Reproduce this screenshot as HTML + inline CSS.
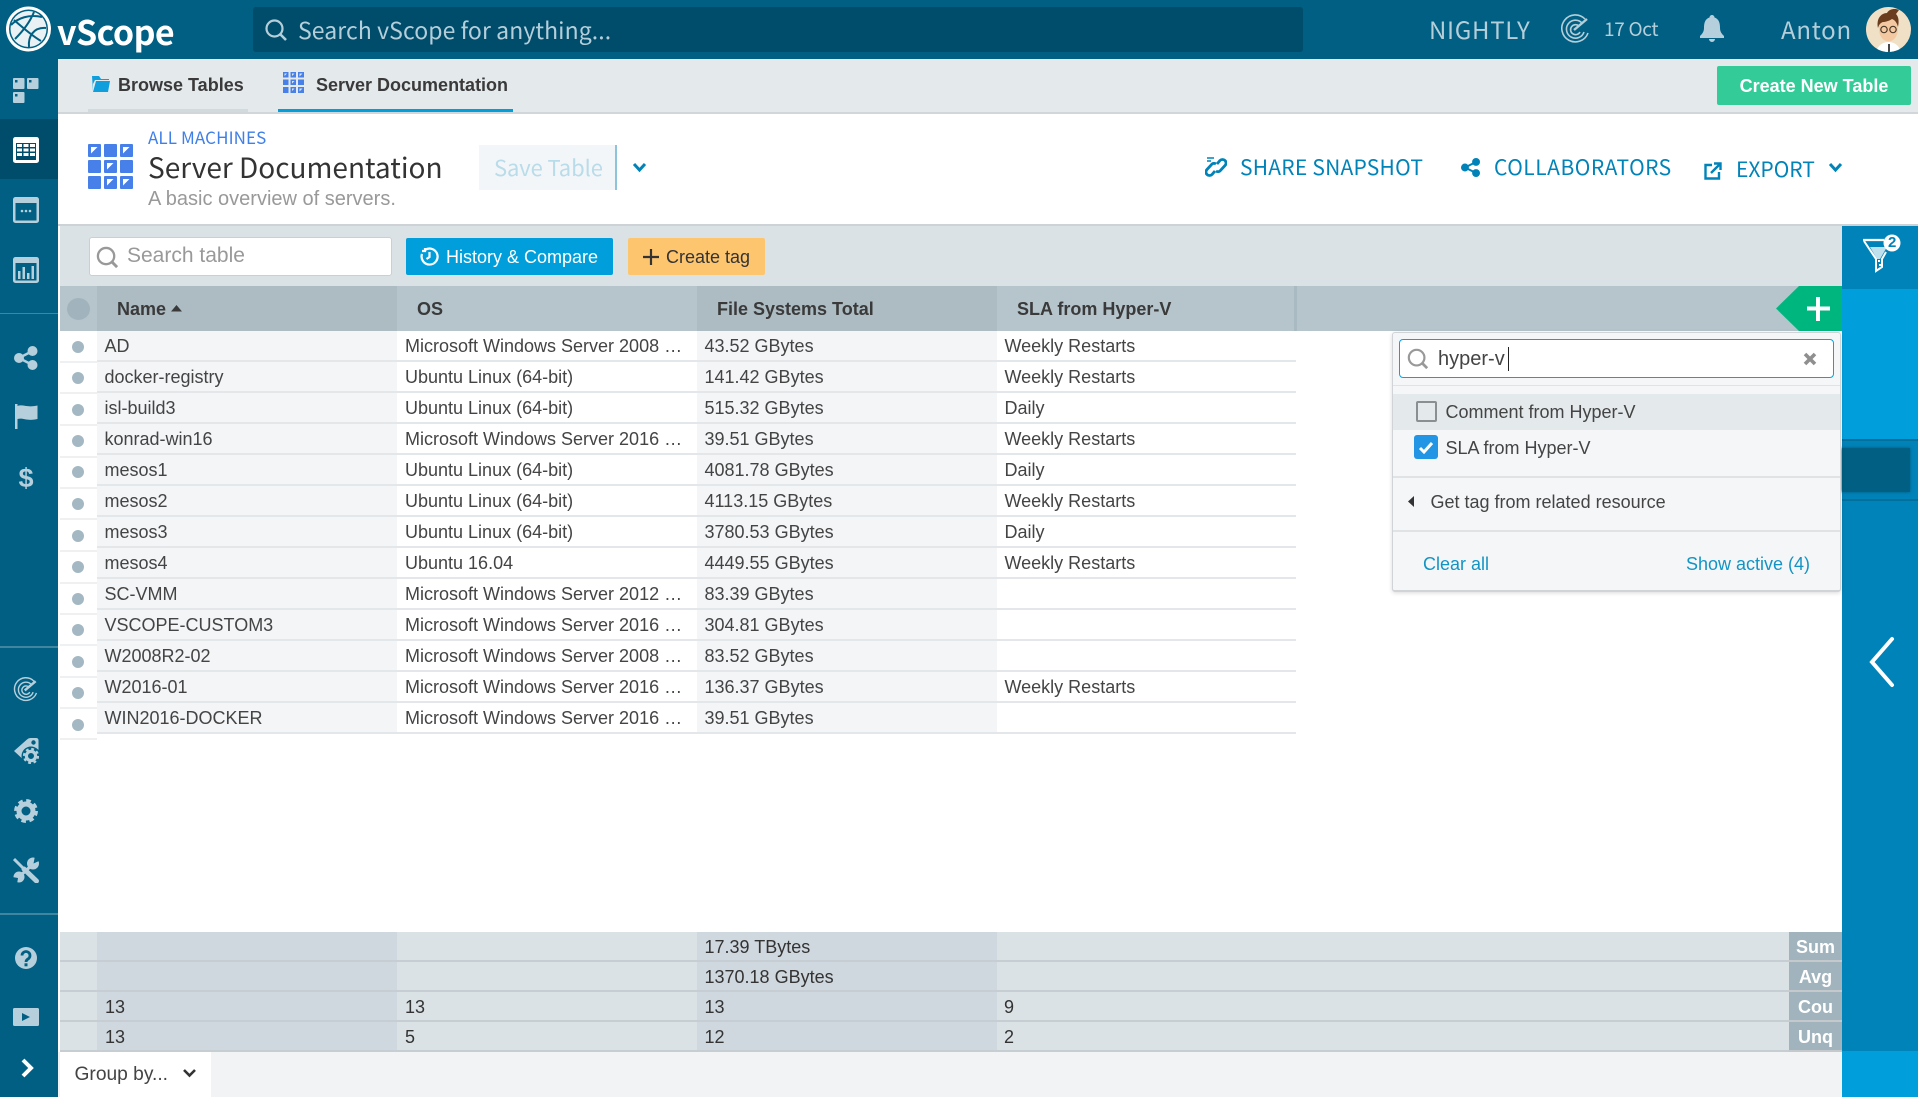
<!DOCTYPE html>
<html lang="en"><head><meta charset="utf-8"><title>vScope</title>
<style>
html,body{margin:0;padding:0;background:#fff}
#p{position:relative;width:1918px;height:1097px;overflow:hidden;background:#fff;font-family:"Liberation Sans",Arial,sans-serif;font-size:18px;color:#444}
#p div,#p span.t,#p svg{position:absolute}
.t{position:absolute;white-space:nowrap;line-height:30px;height:30px}
.o{font-family:"Noto Sans CJK JP","Liberation Sans",sans-serif}
.b{font-weight:bold}
.ic{fill:#b5d0dc}
.row{left:97px;width:1199px;height:31px;box-sizing:border-box;border-bottom:2px solid #e4e7ea}
.row .t{top:0}
.c1{left:7.5px}.c2{left:308px}.c3{left:607.5px}.c4{left:907.5px}
.dot{left:72px;width:12px;height:12px;border-radius:50%;background:#a4b8c3}
.dl{left:60px;width:37px;height:2px;background:#eef0f2}
.sr{left:60px;width:1729px;height:30px;box-sizing:border-box;border-bottom:2px solid #c6ced4;background:#dbe2e5}
.sl{left:1789px;width:53px;height:30px;box-sizing:border-box;border-bottom:2px solid #c5c9cb;background:#a1b4bd;color:#fff;font-weight:bold;text-align:center;line-height:30px;font-size:18px}
.sc{height:120px;top:932px;background:#d0d8df;opacity:1}
</style></head><body>
<div id="p">
<!-- top bar -->
<div style="left:0;top:0;width:1918px;height:59px;background:#005f82"></div>
<div style="left:0;top:59px;width:58px;height:1038px;background:#005f82"></div>
<svg style="left:5px;top:6px" width="47" height="47" viewBox="0 0 47 47"><circle cx="23.500" cy="23" r="22.500" fill="#fff"/><circle cx="23.500" cy="23" r="19.500" fill="#005f82"/><circle cx="23.500" cy="23" r="18" fill="#eaf1f4"/><path d="M6 19C13 12 24 8 37 11M10 33C17 26 25 16 29 6M24 41C23 31 28 21 41 22M9 14C17 21 29 31 36 35" fill="none" stroke="#005f82" stroke-width="2"/></svg>
<span class="t o b" style="left:57px;top:11px;height:40px;line-height:40px;font-size:34px;color:#fff;letter-spacing:-.6px;font-weight:700">vScope</span>
<div style="left:253px;top:7px;width:1050px;height:45px;background:#004c6b;border-radius:3px"></div>
<svg style="left:264px;top:18px" width="24" height="24" viewBox="0 0 24 24"><circle cx="10.500" cy="10.500" r="8" fill="none" stroke="#b5cfda" stroke-width="2.200"/><path d="M16.500 16.500L22 22" stroke="#b5cfda" stroke-width="2.600"/></svg>
<span class="t o" style="left:298px;top:14px;font-size:23px;color:#b5cfda;letter-spacing:.08px">Search vScope for anything...</span>
<span class="t o" style="left:1429px;top:14px;font-size:24px;color:#b5cfda;letter-spacing:.7px">NIGHTLY</span>
<svg style="left:1560px;top:14px" width="31" height="31" viewBox="0 0 31 31" fill="none" stroke="#b5cfda" stroke-width="1.600"><path d="M25 5A13.500 13.500 0 1 0 28 19"/><path d="M22 9A9 9 0 1 0 24 18"/><path d="M19 12A5 5 0 1 0 20 18"/><path d="M14 16L27 5" stroke-width="2.400"/></svg>
<span class="t o" style="left:1604px;top:14px;font-size:19px;color:#b5cfda;letter-spacing:-.3px">17 Oct</span>
<svg style="left:1699px;top:15px" width="26" height="28" viewBox="0 0 26 28"><path class="ic" d="M13 0a2.500 2.500 0 0 1 2.500 2.500C20 4 21 8 21 13c0 4 2 6 4 8v2H1v-2c2-2 4-4 4-8 0-5 1-9 5.500-10.500A2.500 2.500 0 0 1 13 0zM10 24h6a3 3 0 0 1-6 0z"/></svg>
<span class="t o" style="left:1781px;top:14px;font-size:24px;color:#b5cfda;letter-spacing:.75px">Anton</span>
<svg style="left:1866px;top:7px" width="45" height="45" viewBox="0 0 45 45"><defs><clipPath id="a"><circle cx="22.500" cy="22.500" r="22.500"/></clipPath></defs><g clip-path="url(#a)"><rect width="45" height="45" fill="#f0e0c6"/><path d="M10 45c2-7 7-10 12.500-10S33 38 35 45z" fill="#fff"/><ellipse cx="22.500" cy="22" rx="9.500" ry="12.500" fill="#f4c9a2"/><path d="M12 21C10 12 15 6 21 6c2-4 8-5 12-3l-3 4c3 3 3 8 2 13-1-4-3-7-6-8-3 2-7 3-9 3-3 1-4 3-5 6z" fill="#6b3d1f"/><circle cx="18" cy="22.500" r="3.200" fill="none" stroke="#4a3a2a" stroke-width="1.200"/><circle cx="27" cy="22.500" r="3.200" fill="none" stroke="#4a3a2a" stroke-width="1.200"/><path d="M23 37v8" stroke="#333" stroke-width="1.800"/></g></svg>

<!-- sidebar -->
<div style="left:0;top:119px;width:58px;height:60px;background:#004c6b"></div>
<svg style="left:13px;top:78px" width="26" height="26" viewBox="0 0 26 26"><rect class="ic" width="11.500" height="11" rx="1"/><rect class="ic" x="14" width="11.500" height="11" rx="1"/><rect class="ic" y="14" width="11.500" height="11" rx="1"/><rect x="2" y="2" width="2.500" height="2.500" fill="#005f82"/><rect x="16" y="2" width="2.500" height="2.500" fill="#005f82"/><rect x="2" y="16" width="2.500" height="2.500" fill="#005f82"/></svg>
<svg style="left:13px;top:137px" width="26" height="26" viewBox="0 0 26 26"><rect width="26" height="26" rx="2.500" fill="#fff"/><path d="M3 6h20v17H3z" fill="#004c6b"/><path d="M4 7h5v3H4zM10.500 7h5v3h-5zM17 7h5v3h-5zM4 11.500h5v3H4zM10.500 11.500h5v3h-5zM17 11.500h5v3h-5zM4 16h5v3H4zM10.500 16h5v3h-5zM17 16h5v3h-5z" fill="#fff"/></svg>
<svg style="left:13px;top:197px" width="26" height="26" viewBox="0 0 26 26"><rect class="ic" width="26" height="26" rx="2.500"/><rect x="2.500" y="6" width="21" height="17.500" fill="#005f82"/><circle class="ic" cx="9" cy="14" r="1.300"/><circle class="ic" cx="13" cy="14" r="1.300"/><circle class="ic" cx="17" cy="14" r="1.300"/></svg>
<svg style="left:13px;top:257px" width="26" height="26" viewBox="0 0 26 26"><rect class="ic" width="26" height="26" rx="2.500"/><rect x="2.500" y="6" width="21" height="17.500" fill="#005f82"/><path class="ic" d="M5 14h2.500v8H5zM9.500 10h2.500v12H9.500zM14 16h2.500v6H14zM18.500 9H21v13h-2.500z"/></svg>
<div style="left:0;top:313px;width:58px;height:1px;background:#41869f"></div>
<svg style="left:14px;top:346px" width="24" height="24" viewBox="0 0 24 24"><circle class="ic" cx="5" cy="12" r="5"/><circle class="ic" cx="18.500" cy="5" r="5"/><circle class="ic" cx="18.500" cy="19" r="5"/><path d="M5 12L18.500 5M5 12l13.500 7" stroke="#b5d0dc" stroke-width="2.400"/></svg>
<svg style="left:15px;top:404px" width="23" height="26" viewBox="0 0 23 26"><path class="ic" d="M0 0h2.500v25H0zM2.500 2C8 0 12 4 22.500 1.500V15C12 17.500 8 13.500 2.500 15z"/></svg>
<span class="t b" style="left:18.500px;top:463px;font-size:27px;color:#b5d0dc">$</span>
<div style="left:0;top:646px;width:58px;height:2px;background:#41869f"></div>
<svg style="left:13px;top:677px" width="26" height="26" viewBox="0 0 31 31" fill="none" stroke="#b5d0dc" stroke-width="1.700"><path d="M25 5A13.500 13.500 0 1 0 28 19"/><path d="M22 9A9 9 0 1 0 24 18"/><path d="M19 12A5 5 0 1 0 20 18"/><path d="M14 16L27 5" stroke-width="3"/></svg>
<svg style="left:13px;top:737px" width="26" height="27" viewBox="0 0 26 27"><path class="ic" d="M1 14L14 2.500Q15.500 1 17.500 1H23Q25.500 1 25.500 3.500V12Q25.500 14 24 16L14 26z"/><circle cx="20.500" cy="5.500" r="2.200" fill="#005f82"/><circle cx="18" cy="19" r="9.500" fill="#005f82"/><circle cx="18" cy="19" r="4.600" fill="none" stroke="#b5d0dc" stroke-width="3.200"/><circle cx="18" cy="19" r="7" fill="none" stroke="#b5d0dc" stroke-width="2.200" stroke-dasharray="2.800 2.700"/></svg>
<svg style="left:14px;top:799px" width="24" height="24" viewBox="0 0 24 24"><circle cx="12" cy="12" r="7" fill="none" stroke="#b5d0dc" stroke-width="5"/><circle cx="12" cy="12" r="10.200" fill="none" stroke="#b5d0dc" stroke-width="3.500" stroke-dasharray="4.500 3.500"/></svg>
<svg style="left:13px;top:857px" width="26" height="26" viewBox="0 0 26 26"><path d="M1 2L11 12" stroke="#b5d0dc" stroke-width="3"/><path d="M11 12L23.500 24" stroke="#b5d0dc" stroke-width="5" stroke-linecap="round"/><path d="M7 19L19 8" stroke="#b5d0dc" stroke-width="3.200"/><circle class="ic" cx="20" cy="6.500" r="6"/><path d="M20.500 6.500L22 -1L27 3.500z" fill="#005f82"/><circle class="ic" cx="6" cy="20" r="5.500"/><path d="M5 21L-1 20L4 27z" fill="#005f82"/></svg>
<div style="left:0;top:913px;width:58px;height:2px;background:#41869f"></div>
<svg style="left:15px;top:947px" width="22" height="22" viewBox="0 0 22 22"><circle class="ic" cx="11" cy="11" r="11"/><path d="M7 8.500a4 4 0 1 1 6 3.500c-1.300.8-2 1.300-2 3" fill="none" stroke="#005f82" stroke-width="2.800"/><rect x="9.500" y="16.300" width="3" height="3" fill="#005f82"/></svg>
<svg style="left:13px;top:1008px" width="26" height="18" viewBox="0 0 26 18"><rect class="ic" width="26" height="18" rx="1.500"/><path d="M9 5l8 4-8 4z" fill="#005f82"/></svg>
<svg style="left:20px;top:1058px" width="14" height="20" viewBox="0 0 14 20"><path d="M3 2l8 8-8 8" fill="none" stroke="#fff" stroke-width="4"/></svg>

<!-- tabs -->
<div style="left:58px;top:59px;width:1860px;height:55px;background:#e4e9ec;border-bottom:2px solid #d0d6da;box-sizing:border-box"></div>
<div style="left:88px;top:109px;width:160px;height:3px;background:#d2dade"></div>
<div style="left:278px;top:109px;width:235px;height:3px;background:#009fdb"></div>
<svg style="left:92px;top:75px" width="18" height="17" viewBox="0 0 18 17"><path d="M0 1h7l2 3h8v1H3L1 9v7zM4 6h14l-2 11H1z" fill="#0f9fdc"/></svg>
<span class="t b" style="left:118px;top:70px;color:#3a3a3a">Browse Tables</span>
<svg style="left:283px;top:72px" width="21" height="21" viewBox="0 0 21 21" fill="#4680e8"><path d="M0 0h5.500v5.500H0zM7.500 0H13v5.500H7.500zM15 0h6v5.500h-6zM0 7.500h5.500V13H0zM7.500 7.500H13V13H7.500zM15 7.500h6V13h-6zM0 15h5.500v6H0zM7.500 15H13v6H7.500zM15 15h6v6h-6z"/><path fill="#dfe6ea" d="M1.500 1.500h2.500l-2.500 2.500zM16.500 1.500h3l-3 3zM9 1.500h2.500L9 4zM9 9h2.500L9 11.500zM9 16.500h2.500L9 19zM16.500 16.500h3l-3 3z"/></svg>
<span class="t b" style="left:316px;top:70px;color:#3a3a3a">Server Documentation</span>
<div style="left:1717px;top:66px;width:194px;height:39px;background:#33cc99;border-radius:2px;color:#fff;font-weight:bold;text-align:center;line-height:41px">Create New Table</div>

<!-- page header -->
<svg style="left:88px;top:144px" width="45" height="45" viewBox="0 0 45 45" fill="#4680e8"><rect width="13" height="13" rx="1"/><rect x="16" width="13" height="13" rx="1"/><rect x="32" width="13" height="13" rx="1"/><rect y="16" width="13" height="13" rx="1"/><rect x="16" y="16" width="13" height="13" rx="1"/><rect x="32" y="16" width="13" height="13" rx="1"/><rect y="32" width="13" height="13" rx="1"/><rect x="16" y="32" width="13" height="13" rx="1"/><rect x="32" y="32" width="13" height="13" rx="1"/><path fill="#fff" d="M3 3h6.500L3 9.500zM35 3h6.500L35 9.500zM19 19h6.500L19 25.500zM19 35h6.500L19 41.500zM35 35h6.500L35 41.500z"/></svg>
<span class="t o" style="left:148px;top:122px;font-size:17px;color:#3f7fe8;letter-spacing:.1px">ALL MACHINES</span>
<span class="t o" style="left:148px;top:152px;font-size:28px;color:#333;letter-spacing:0">Server Documentation</span>
<span class="t" style="left:148px;top:184px;font-size:20px;color:#999">A basic overview of servers.</span>
<div style="left:479px;top:145px;width:136px;height:45px;background:#f3f6f8;border-right:2px solid #8cc4dc"></div>
<span class="t o" style="left:494px;top:152px;font-size:22px;color:#b9dcea;letter-spacing:-.1px">Save Table</span>
<svg style="left:632px;top:162px" width="15" height="11" viewBox="0 0 15 11"><path d="M2 2l5.500 6L13 2" fill="none" stroke="#0083b8" stroke-width="3"/></svg>
<svg style="left:1205px;top:156px" width="22" height="22" viewBox="0 0 22 22" fill="none" stroke="#0083b8" stroke-width="2.800"><path d="M12 8l3-3.500a3.500 3.500 0 0 1 5 5l-5 5.500a3.500 3.500 0 0 1-4 0"/><path d="M10 15l-3 3.500a3.500 3.500 0 0 1-5-5l5-5.500a3.500 3.500 0 0 1 4 0"/><path d="M2 2h7M2 5h4" stroke-width="1.500"/></svg>
<span class="t o" style="left:1240px;top:152px;font-size:21px;color:#0083b8;letter-spacing:.23px">SHARE SNAPSHOT</span>
<svg style="left:1461px;top:158px" width="19" height="19" viewBox="0 0 24 24"><circle fill="#0083b8" cx="5" cy="12" r="5"/><circle fill="#0083b8" cx="19" cy="5" r="5"/><circle fill="#0083b8" cx="19" cy="19" r="5"/><path d="M5 12L19 5M5 12l14 7" stroke="#0083b8" stroke-width="2.500"/></svg>
<span class="t o" style="left:1494px;top:152px;font-size:21px;color:#0083b8;letter-spacing:.5px">COLLABORATORS</span>
<svg style="left:1704px;top:162px" width="18" height="18" viewBox="0 0 18 18" fill="none" stroke="#0083b8" stroke-width="2.400"><path d="M8 3H1.500v13.500H15V10"/><path d="M7 11L16 2M10 1.500h6.500V8"/></svg>
<span class="t o" style="left:1736px;top:154px;font-size:21px;color:#0083b8;letter-spacing:0">EXPORT</span>
<svg style="left:1828px;top:162px" width="15" height="11" viewBox="0 0 15 11"><path d="M2 2l5.500 6L13 2" fill="none" stroke="#0083b8" stroke-width="3"/></svg>

<!-- toolbar -->
<div style="left:58px;top:224px;width:1860px;height:2px;background:#ccd2d6"></div>
<div style="left:60px;top:226px;width:1782px;height:60px;background:#dbe2e5"></div>
<div style="left:89px;top:237px;width:303px;height:39px;box-sizing:border-box;background:#fff;border:1px solid #c9cfd2;border-radius:3px"></div>
<svg style="left:96px;top:246px" width="23" height="23" viewBox="0 0 24 24"><circle cx="10.500" cy="10.500" r="8.500" fill="none" stroke="#999" stroke-width="2.400"/><path d="M16.500 16.500L22 22" stroke="#999" stroke-width="3"/></svg>
<span class="t" style="left:127px;top:241px;font-size:21px;color:#999">Search table</span>
<div style="left:406px;top:238px;width:207px;height:37px;background:#009fdb;border-radius:2px"></div>
<svg style="left:420px;top:247px" width="19" height="19" viewBox="0 0 19 19" fill="none" stroke="#fff" stroke-width="2.200"><path d="M5 3a8 8 0 1 1-3 4"/><path d="M2 4h3V1M9.500 5v5l-3 2"/></svg>
<span class="t" style="left:446px;top:242px;color:#fff">History &amp; Compare</span>
<div style="left:628px;top:238px;width:137px;height:37px;background:#fec56f;border-radius:2px"></div>
<svg style="left:643px;top:249px" width="16" height="16" viewBox="0 0 16 16"><path d="M8 0v16M0 8h16" stroke="#333" stroke-width="2.200"/></svg>
<span class="t" style="left:666px;top:242px;color:#333">Create tag</span>

<!-- table header -->
<div style="left:60px;top:286px;width:1782px;height:45px;background:#b6c4cc"></div>
<div style="left:97px;top:286px;width:300px;height:45px;background:#adbcc3"></div>
<div style="left:697px;top:286px;width:300px;height:45px;background:#adbcc3"></div>
<div style="left:1294px;top:286px;width:3px;height:45px;background:#a9bac3"></div>
<div style="left:67px;top:298px;width:23px;height:22px;border-radius:50%;background:#a1b4bd"></div>
<span class="t b" style="left:117px;top:294px;color:#3a3a3a">Name</span>
<svg style="left:171px;top:305px" width="11" height="7" viewBox="0 0 11 7"><path d="M5.500 0L11 6.500H0z" fill="#3a3a3a"/></svg>
<span class="t b" style="left:417px;top:294px;color:#3a3a3a">OS</span>
<span class="t b" style="left:717px;top:294px;color:#3a3a3a">File Systems Total</span>
<span class="t b" style="left:1017px;top:294px;color:#3a3a3a">SLA from Hyper-V</span>
<svg style="left:1776px;top:286px" width="66" height="45" viewBox="0 0 66 45"><path d="M23 0H66V45H23L0 22.500z" fill="#00b67f"/><path d="M42 11v24M31 22.500h23" stroke="#fff" stroke-width="4"/></svg>

<!-- table body -->
<div style="left:97px;top:331px;width:300px;height:403px;background:#f3f5f7"></div>
<div style="left:697px;top:331px;width:300px;height:403px;background:#f3f5f7"></div>
<div class="dot" style="top:341px"></div><div class="dl" style="top:361px"></div>
<div class="dot" style="top:372px"></div><div class="dl" style="top:392px"></div>
<div class="dot" style="top:404px"></div><div class="dl" style="top:424px"></div>
<div class="dot" style="top:435px"></div><div class="dl" style="top:456px"></div>
<div class="dot" style="top:466px"></div><div class="dl" style="top:487px"></div>
<div class="dot" style="top:498px"></div><div class="dl" style="top:518px"></div>
<div class="dot" style="top:530px"></div><div class="dl" style="top:550px"></div>
<div class="dot" style="top:561px"></div><div class="dl" style="top:582px"></div>
<div class="dot" style="top:593px"></div><div class="dl" style="top:613px"></div>
<div class="dot" style="top:624px"></div><div class="dl" style="top:644px"></div>
<div class="dot" style="top:656px"></div><div class="dl" style="top:676px"></div>
<div class="dot" style="top:687px"></div><div class="dl" style="top:707px"></div>
<div class="dot" style="top:719px"></div><div class="dl" style="top:738px"></div>

<div class="row" style="top:331px"><span class="t c1">AD</span><span class="t c2">Microsoft Windows Server 2008 …</span><span class="t c3">43.52 GBytes</span><span class="t c4">Weekly Restarts</span></div>
<div class="row" style="top:362px"><span class="t c1">docker-registry</span><span class="t c2">Ubuntu Linux (64-bit)</span><span class="t c3">141.42 GBytes</span><span class="t c4">Weekly Restarts</span></div>
<div class="row" style="top:393px"><span class="t c1">isl-build3</span><span class="t c2">Ubuntu Linux (64-bit)</span><span class="t c3">515.32 GBytes</span><span class="t c4">Daily</span></div>
<div class="row" style="top:424px"><span class="t c1">konrad-win16</span><span class="t c2">Microsoft Windows Server 2016 …</span><span class="t c3">39.51 GBytes</span><span class="t c4">Weekly Restarts</span></div>
<div class="row" style="top:455px"><span class="t c1">mesos1</span><span class="t c2">Ubuntu Linux (64-bit)</span><span class="t c3">4081.78 GBytes</span><span class="t c4">Daily</span></div>
<div class="row" style="top:486px"><span class="t c1">mesos2</span><span class="t c2">Ubuntu Linux (64-bit)</span><span class="t c3">4113.15 GBytes</span><span class="t c4">Weekly Restarts</span></div>
<div class="row" style="top:517px"><span class="t c1">mesos3</span><span class="t c2">Ubuntu Linux (64-bit)</span><span class="t c3">3780.53 GBytes</span><span class="t c4">Daily</span></div>
<div class="row" style="top:548px"><span class="t c1">mesos4</span><span class="t c2">Ubuntu 16.04</span><span class="t c3">4449.55 GBytes</span><span class="t c4">Weekly Restarts</span></div>
<div class="row" style="top:579px"><span class="t c1">SC-VMM</span><span class="t c2">Microsoft Windows Server 2012 …</span><span class="t c3">83.39 GBytes</span></div>
<div class="row" style="top:610px"><span class="t c1">VSCOPE-CUSTOM3</span><span class="t c2">Microsoft Windows Server 2016 …</span><span class="t c3">304.81 GBytes</span></div>
<div class="row" style="top:641px"><span class="t c1">W2008R2-02</span><span class="t c2">Microsoft Windows Server 2008 …</span><span class="t c3">83.52 GBytes</span></div>
<div class="row" style="top:672px"><span class="t c1">W2016-01</span><span class="t c2">Microsoft Windows Server 2016 …</span><span class="t c3">136.37 GBytes</span><span class="t c4">Weekly Restarts</span></div>
<div class="row" style="top:703px"><span class="t c1">WIN2016-DOCKER</span><span class="t c2">Microsoft Windows Server 2016 …</span><span class="t c3">39.51 GBytes</span></div>

<!-- summary -->
<div class="sr" style="top:932px"></div><div class="sr" style="top:962px"></div><div class="sr" style="top:992px"></div><div class="sr" style="top:1022px"></div>
<div class="sc" style="left:97px;width:300px"></div>
<div class="sc" style="left:697px;width:300px"></div>
<div style="left:60px;top:960px;width:1729px;height:2px;background:#c6ced4"></div>
<div style="left:60px;top:990px;width:1729px;height:2px;background:#c6ced4"></div>
<div style="left:60px;top:1020px;width:1729px;height:2px;background:#c6ced4"></div>
<div style="left:60px;top:1050px;width:1729px;height:2px;background:#c6ced4"></div>
<div class="sl" style="top:932px">Sum</div><div class="sl" style="top:962px">Avg</div><div class="sl" style="top:992px">Cou</div><div class="sl" style="top:1022px">Unq</div>
<span class="t" style="left:704.500px;top:932px;color:#333">17.39 TBytes</span>
<span class="t" style="left:704.500px;top:962px;color:#333">1370.18 GBytes</span>
<span class="t" style="left:105px;top:992px;color:#333">13</span><span class="t" style="left:405px;top:992px;color:#333">13</span><span class="t" style="left:704.500px;top:992px;color:#333">13</span><span class="t" style="left:1004px;top:992px;color:#333">9</span>
<span class="t" style="left:105px;top:1022px;color:#333">13</span><span class="t" style="left:405px;top:1022px;color:#333">5</span><span class="t" style="left:704.500px;top:1022px;color:#333">12</span><span class="t" style="left:1004px;top:1022px;color:#333">2</span>

<!-- bottom bar -->
<div style="left:58px;top:1052px;width:1784px;height:45px;background:#f2f3f5"></div>
<div style="left:60px;top:1052px;width:151px;height:45px;background:#fff"></div>
<span class="t" style="left:74.500px;top:1060px;font-size:19.200px;color:#444">Group by...</span>
<svg style="left:183px;top:1068px" width="13" height="10" viewBox="0 0 13 10"><path d="M1 2l5.500 5.500L12 2" fill="none" stroke="#333" stroke-width="2.600"/></svg>

<!-- right rail -->
<div style="left:1842px;top:226px;width:76px;height:63px;background:#0083b8"></div>
<div style="left:1842px;top:289px;width:76px;height:150px;background:#009fdb"></div>
<div style="left:1842px;top:439px;width:76px;height:612px;background:#0083b8"></div>
<div style="left:1842px;top:439px;width:76px;height:2px;background:#006f9c"></div>
<div style="left:1842px;top:499px;width:76px;height:2px;background:#006f9c"></div>
<div style="left:1842px;top:448px;width:68px;height:44px;background:#005f82;box-shadow:0 0 3px #00577a"></div>
<div style="left:1842px;top:1051px;width:76px;height:46px;background:#009fdb"></div>
<svg style="left:1850px;top:226px" width="60" height="52" viewBox="0 0 60 52"><path d="M13 14H34" stroke="#fff" stroke-width="2.200"/><path d="M14 15L26 33V45L32 41V33L36 26" fill="none" stroke="#fff" stroke-width="2"/><path d="M20 21H37L30 33H27z" fill="#fff" opacity=".75"/><path d="M28 34h2v2h-2zM29 38h2v2h-2z" fill="#fff"/><circle cx="42" cy="17" r="8.500" fill="#fff"/></svg>
<span class="t b" style="left:1888px;top:228px;font-size:15px;color:#0083b8">2</span>
<svg style="left:1865.500px;top:635px" width="30" height="54" viewBox="0 0 30 54"><path d="M26 4L6 27l20 23" fill="none" stroke="#fff" stroke-width="4" stroke-linecap="round"/></svg>

<!-- dropdown -->
<div style="left:1392px;top:332px;width:449px;height:260px;box-sizing:border-box;background:#f4f6f8;border:1px solid #d0d4d7;border-bottom-width:2px;border-radius:3px;box-shadow:0 1px 4px rgba(0,0,0,.15)"></div>
<div style="left:1399px;top:339px;width:435px;height:39px;box-sizing:border-box;background:#fff;border:1px solid #12a0d8;border-radius:4px"></div>
<svg style="left:1407px;top:348px" width="22" height="22" viewBox="0 0 24 24"><circle cx="10.500" cy="10.500" r="8.500" fill="none" stroke="#999" stroke-width="2.400"/><path d="M16.500 16.500L22 22" stroke="#999" stroke-width="3"/></svg>
<span class="t" style="left:1438px;top:344px;font-size:20px;color:#444">hyper-v</span>
<div style="left:1507.500px;top:347px;width:1px;height:24px;background:#222"></div>
<svg style="left:1803px;top:352px" width="14" height="14" viewBox="0 0 14 14"><path d="M2 2l10 10M12 2L2 12" stroke="#8f8f8f" stroke-width="3.600"/></svg>
<div style="left:1393px;top:385px;width:447px;height:1px;background:#dfe3e6"></div>
<div style="left:1393px;top:394px;width:447px;height:36px;background:#e4e9eb"></div>
<div style="left:1415.500px;top:401px;width:21px;height:21px;box-sizing:border-box;border:2px solid #8a8f92;border-radius:2px"></div>
<span class="t" style="left:1445.500px;top:397px;color:#444">Comment from Hyper-V</span>
<div style="left:1414px;top:435px;width:24px;height:24px;background:#2296e4;border-radius:3px"></div>
<svg style="left:1418px;top:441px" width="16" height="13" viewBox="0 0 16 13"><path d="M2 7l4 4 8-9" fill="none" stroke="#fff" stroke-width="3"/></svg>
<span class="t" style="left:1445.500px;top:433px;color:#444">SLA from Hyper-V</span>
<div style="left:1393px;top:476px;width:447px;height:2px;background:#dfe3e6"></div>
<svg style="left:1408px;top:496px" width="7" height="11" viewBox="0 0 7 11"><path d="M6 0v11L0 5.500z" fill="#333"/></svg>
<span class="t" style="left:1430.500px;top:487px;color:#444">Get tag from related resource</span>
<div style="left:1393px;top:530px;width:447px;height:2px;background:#dfe3e6"></div>
<span class="t" style="left:1423px;top:549px;color:#1494c4">Clear all</span>
<span class="t" style="left:1686px;top:549px;color:#1494c4">Show active (4)</span>
</div>
</body></html>
